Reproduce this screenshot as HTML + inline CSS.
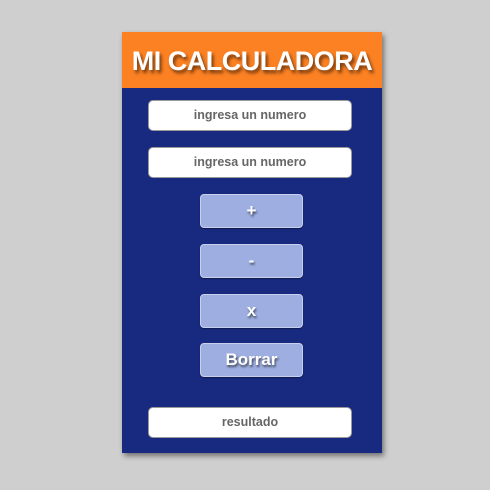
<!DOCTYPE html>
<html><head><style>
body{margin:0;width:490px;height:490px;background:#cfcfcf;font-family:"Liberation Sans",sans-serif;position:relative;overflow:hidden}
.panel{position:absolute;left:122px;top:32px;width:260px;height:421px;background:#182a80;box-shadow:2px 3px 5px rgba(0,0,0,.45)}
.hd{position:absolute;left:0;top:0;width:260px;height:56px;background:#fc8123;color:#fff;font-weight:bold;font-size:27px;text-align:center;line-height:58px;text-shadow:2px 3px 3px rgba(0,0,0,.55);letter-spacing:-0.5px}
.in{position:absolute;left:26px;width:202px;height:29px;background:#fff;border:1px solid #9a9a9a;border-radius:5px;color:#666;font-weight:bold;font-size:12.5px;text-align:center;line-height:29px}
.bt{position:absolute;left:78px;width:101px;height:32px;background:#9eaee0;border:1px solid #c8d0ee;border-radius:4px;color:#fff;font-weight:bold;font-size:17px;text-align:center;line-height:32px;text-shadow:1px 2px 2px rgba(0,0,0,.6);box-shadow:0 1px 1px rgba(0,0,0,.4)}
</style></head><body>
<div class="panel">
<div class="hd">MI CALCULADORA</div>
<div class="in" style="top:68px">ingresa un numero</div>
<div class="in" style="top:115px">ingresa un numero</div>
<div class="bt" style="top:162px">+</div>
<div class="bt" style="top:212px">-</div>
<div class="bt" style="top:262px">x</div>
<div class="bt" style="top:311px">Borrar</div>
<div class="in" style="top:375px">resultado</div>
</div>
</body></html>
